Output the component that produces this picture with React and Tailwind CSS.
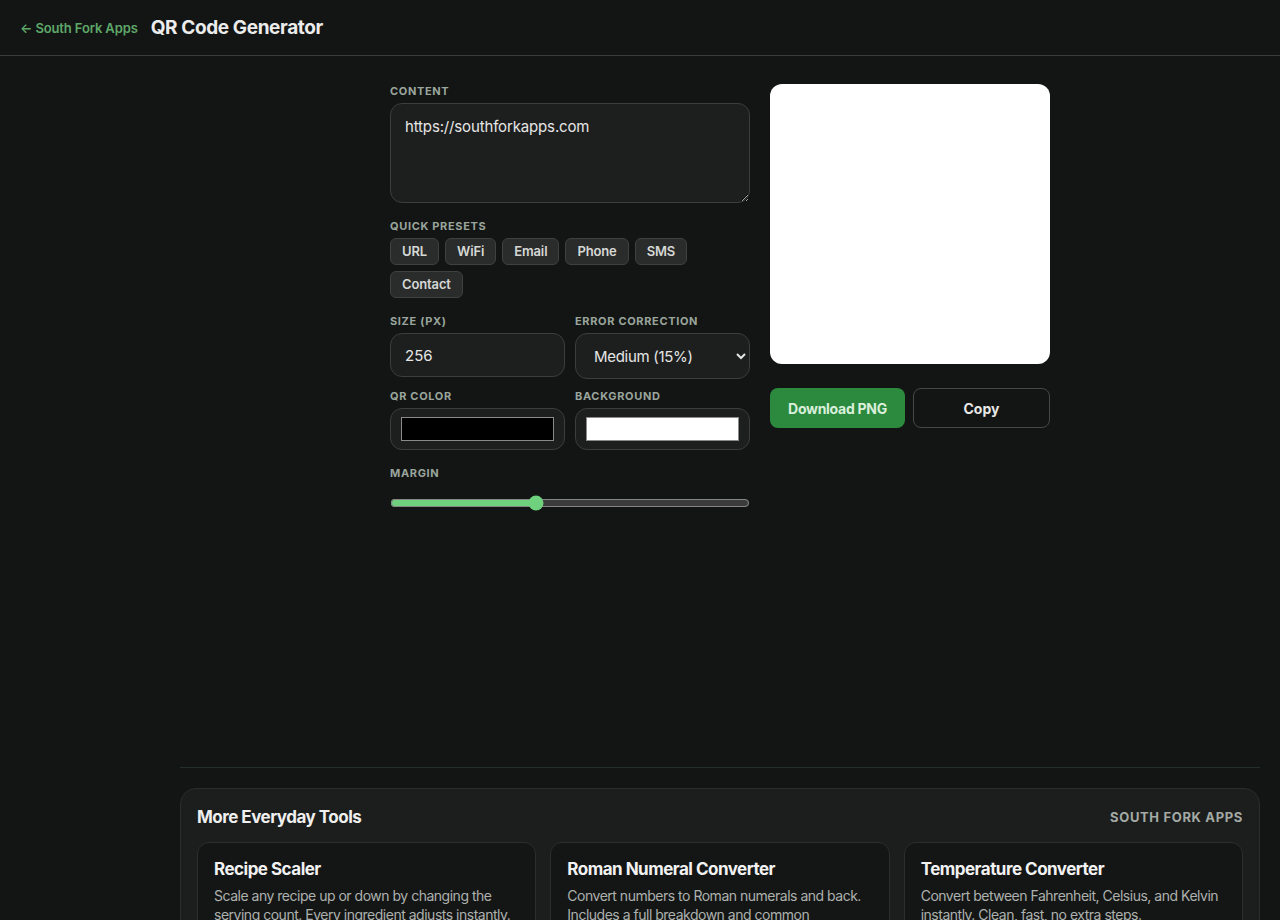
import React, { useState } from "react";

const font = { fontFamily: '"Inter", "Noto Sans", sans-serif' };

const presets = ["URL", "WiFi", "Email", "Phone", "SMS", "Contact"];

const tools = [
  {
    title: "Recipe Scaler",
    desc: "Scale any recipe up or down by changing the serving count. Every ingredient adjusts instantly.",
  },
  {
    title: "Roman Numeral Converter",
    desc: "Convert numbers to Roman numerals and back. Includes a full breakdown and common conversions.",
  },
  {
    title: "Temperature Converter",
    desc: "Convert between Fahrenheit, Celsius, and Kelvin instantly. Clean, fast, no extra steps.",
  },
];

function Label({ children }) {
  return (
    <div className="text-[11px] font-bold uppercase tracking-[0.06em] text-[#9aa59d] leading-[14px] mb-[5px]">
      {children}
    </div>
  );
}

export default function App() {
  const [text, setText] = useState("https://southforkapps.com");
  const [size, setSize] = useState("256");
  const [level, setLevel] = useState("M");
  const [fg, setFg] = useState("#000000");
  const [bg, setBg] = useState("#ffffff");
  const [margin, setMargin] = useState(4);

  const colorCls =
    "block w-full h-[42px] rounded-xl border border-[#3c3e3d] bg-[#1d1f1e] px-[10px] py-[8px] cursor-pointer [&::-webkit-color-swatch-wrapper]:p-0 [&::-webkit-color-swatch]:border [&::-webkit-color-swatch]:border-[#8a8a8a] [&::-webkit-color-swatch]:rounded-none";

  return (
    <div style={font} className="min-h-[920px] bg-[#131514] text-[#e8e8e8] [color-scheme:dark] overflow-hidden">
      <header className="h-[56px] border-b border-[#3b3d3c] flex items-center pt-[2px] px-[20px] gap-[13px]">
        <a className="text-[13px] font-semibold text-[#5ea869] tracking-[-0.01em]">← South Fork Apps</a>
        <h1 className="text-[19px] font-bold text-[#ececec] tracking-[-0.02em]">QR Code Generator</h1>
      </header>

      <div className="flex">
        <aside className="w-[180px] shrink-0" />
        <div className="flex-1 pr-[20px]">
          <main className="h-[711px] pt-[28px] flex justify-center gap-[20px]">
            <section className="w-[360px]">
              <Label>Content</Label>
              <textarea
                value={text}
                onChange={(e) => setText(e.target.value)}
                className="block w-full h-[100px] rounded-xl border border-[#3c3e3d] bg-[#1d1f1e] px-[14px] py-[12px] text-[15px] text-[#e6e6e6] tracking-[-0.01em] outline-none resize-y"
              />

              <div className="mt-[16px]">
                <Label>Quick Presets</Label>
                <div className="flex flex-wrap gap-[6px]">
                  {presets.map((p) => (
                    <button
                      key={p}
                      className="h-[27px] px-[11px] rounded-md border border-[#3f413f] bg-[#2a2c2b] text-[13px] font-semibold text-[#d6d8d6] tracking-[-0.01em]"
                    >
                      {p}
                    </button>
                  ))}
                </div>
              </div>

              <div className="mt-[16px] grid grid-cols-2 gap-[10px]">
                <div>
                  <Label>Size (px)</Label>
                  <input
                    value={size}
                    onChange={(e) => setSize(e.target.value)}
                    className="block w-full h-[44px] rounded-xl border border-[#3c3e3d] bg-[#1d1f1e] px-[14px] text-[15px] text-[#e6e6e6] outline-none"
                  />
                </div>
                <div>
                  <Label>Error Correction</Label>
                  <select
                    value={level}
                    onChange={(e) => setLevel(e.target.value)}
                    className="block w-full h-[46px] rounded-xl border border-[#3c3e3d] bg-[#1d1f1e] px-[14px] text-[15px] text-[#e6e6e6] tracking-[-0.02em] outline-none"
                  >
                    <option value="L">Low (7%)</option>
                    <option value="M">Medium (15%)</option>
                    <option value="Q">Quartile (25%)</option>
                    <option value="H">High (30%)</option>
                  </select>
                </div>
              </div>

              <div className="mt-[10px] grid grid-cols-2 gap-[10px]">
                <div>
                  <Label>QR Color</Label>
                  <input type="color" value={fg} onChange={(e) => setFg(e.target.value)} className={colorCls} />
                </div>
                <div>
                  <Label>Background</Label>
                  <input type="color" value={bg} onChange={(e) => setBg(e.target.value)} className={colorCls} />
                </div>
              </div>

              <div className="mt-[16px]">
                <Label>Margin</Label>
                <input
                  type="range"
                  min="0"
                  max="10"
                  value={margin}
                  onChange={(e) => setMargin(Number(e.target.value))}
                  className="block w-full mt-[15px] accent-[#6fd07e]"
                />
              </div>
            </section>

            <section className="w-[280px]">
              <div className="w-[280px] h-[280px] rounded-xl bg-white" />
              <div className="mt-[24px] flex gap-[8px]">
                <button className="flex-1 h-[40px] rounded-lg bg-[#2b8a3e] text-[14px] font-bold text-[#d9efdb] tracking-[-0.02em]">
                  Download PNG
                </button>
                <button className="flex-1 h-[40px] rounded-lg border border-[#464847] text-[14px] font-bold text-[#e6e6e6]">
                  Copy
                </button>
              </div>
            </section>
          </main>

          <footer className="border-t border-[#223027] pt-[20px]">
            <div className="rounded-2xl border border-[#2b2d2c] bg-[#1c1e1d] px-[16px] pt-[16px] pb-[20px]">
              <div className="flex items-center justify-between">
                <h2 className="text-[17px] font-bold text-[#efefef] tracking-[-0.03em]">More Everyday Tools</h2>
                <span className="text-[13px] font-bold uppercase tracking-[0.05em] text-[#a3aaa5]">South Fork Apps</span>
              </div>
              <div className="mt-[11px] grid grid-cols-3 gap-[14px]">
                {tools.map((t) => (
                  <div key={t.title} className="rounded-xl border border-[#2c2e2d] bg-[#141615] px-[16px] pt-[14px] pb-[16px]">
                    <h3 className="text-[17px] font-bold text-[#f2f2f2] tracking-[-0.03em]">{t.title}</h3>
                    <p className="mt-[4px] text-[14px] leading-[19px] text-[#adb1ae] tracking-[-0.035em]">{t.desc}</p>
                  </div>
                ))}
              </div>
            </div>
          </footer>
        </div>
      </div>
    </div>
  );
}
